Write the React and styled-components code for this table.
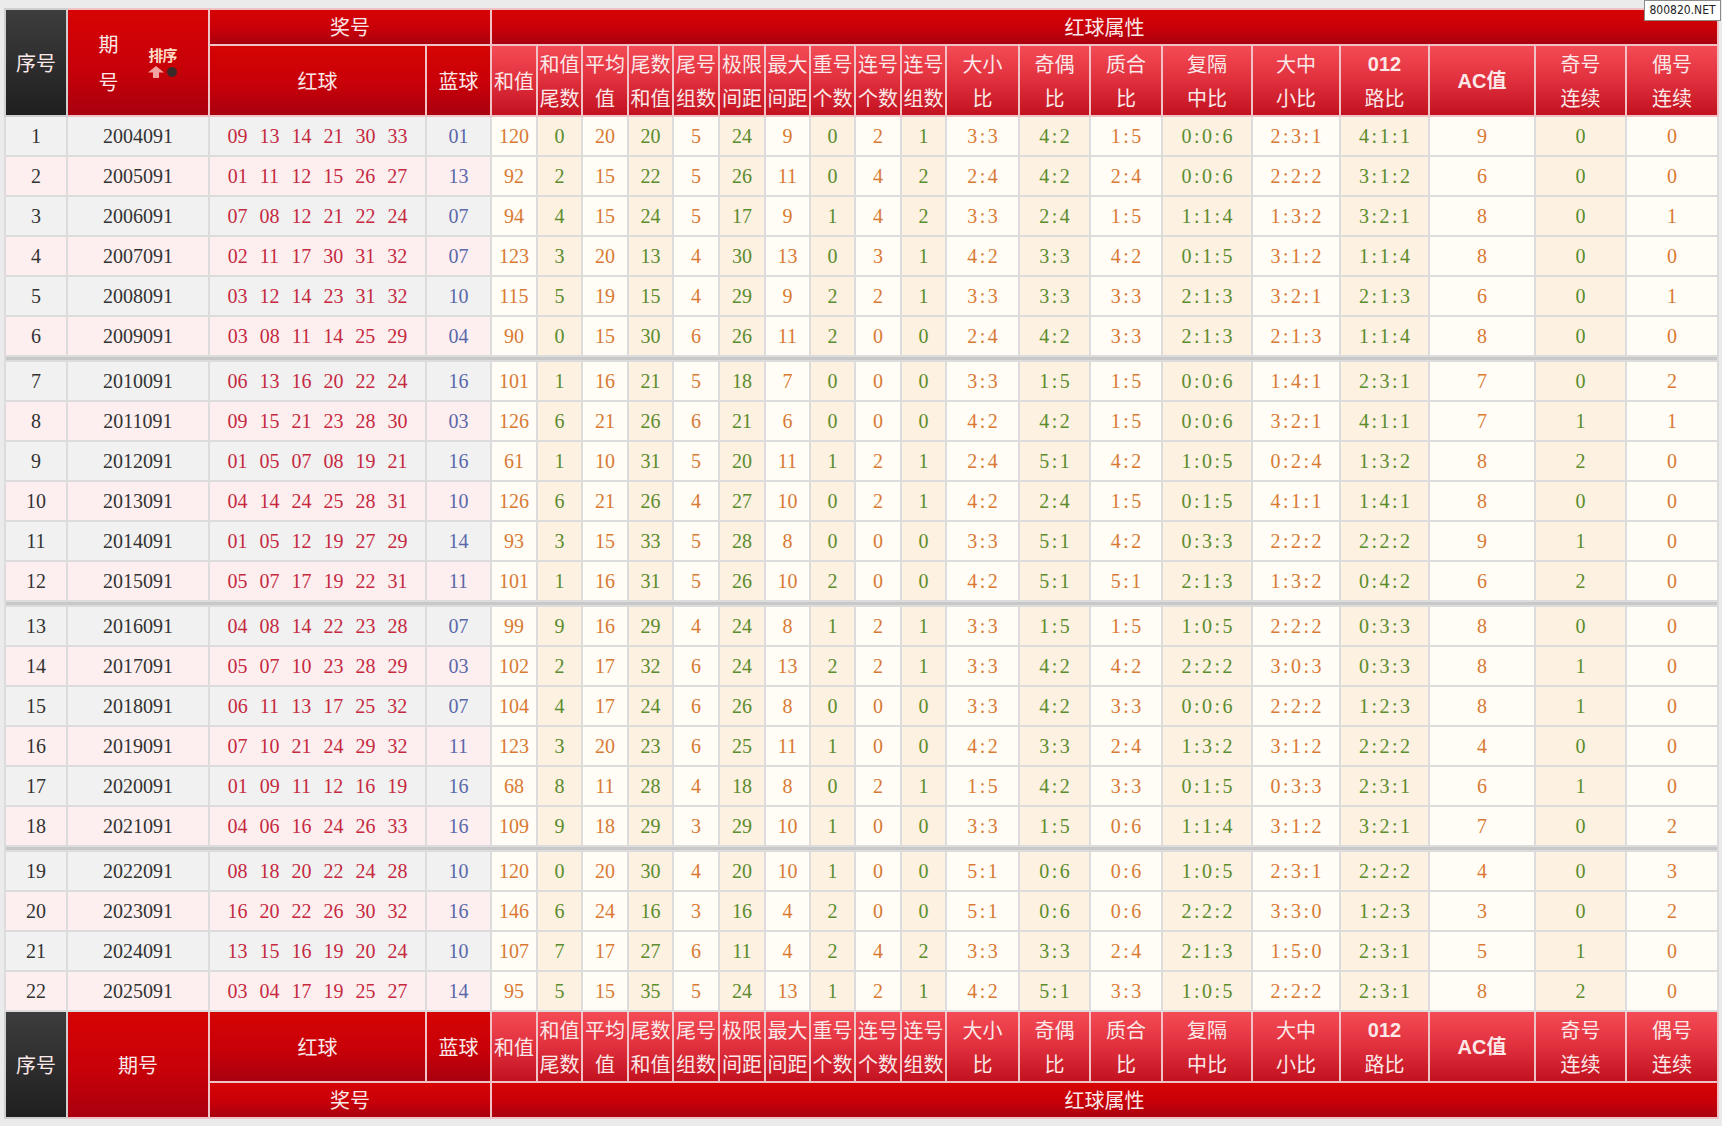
import React from "react";
import styled, { createGlobalStyle } from "styled-components";

const GlobalStyle = createGlobalStyle`
  body {
    margin: 0;
    background: #ebebeb;
    font-family: "Liberation Serif", "Noto Sans CJK SC", serif;
  }
`;

const widths = [62, 142, 217, 65, 46, 45, 46, 45, 46, 46, 45, 45, 46, 45, 73, 71, 72, 90, 88, 89, 106, 91, 92];

const attrHeads = [
  ["和值"], ["和值", "尾数"], ["平均", "值"], ["尾数", "和值"], ["尾号", "组数"],
  ["极限", "间距"], ["最大", "间距"], ["重号", "个数"], ["连号", "个数"], ["连号", "组数"],
  ["大小", "比"], ["奇偶", "比"], ["质合", "比"], ["复隔", "中比"], ["大中", "小比"],
  ["012", "路比"], ["AC值"], ["奇号", "连续"], ["偶号", "连续"],
];

const rows = [
  ["2004091", "09 13 14 21 30 33", "01", "120 0 20 20 5 24 9 0 2 1 3:3 4:2 1:5 0:0:6 2:3:1 4:1:1 9 0 0"],
  ["2005091", "01 11 12 15 26 27", "13", "92 2 15 22 5 26 11 0 4 2 2:4 4:2 2:4 0:0:6 2:2:2 3:1:2 6 0 0"],
  ["2006091", "07 08 12 21 22 24", "07", "94 4 15 24 5 17 9 1 4 2 3:3 2:4 1:5 1:1:4 1:3:2 3:2:1 8 0 1"],
  ["2007091", "02 11 17 30 31 32", "07", "123 3 20 13 4 30 13 0 3 1 4:2 3:3 4:2 0:1:5 3:1:2 1:1:4 8 0 0"],
  ["2008091", "03 12 14 23 31 32", "10", "115 5 19 15 4 29 9 2 2 1 3:3 3:3 3:3 2:1:3 3:2:1 2:1:3 6 0 1"],
  ["2009091", "03 08 11 14 25 29", "04", "90 0 15 30 6 26 11 2 0 0 2:4 4:2 3:3 2:1:3 2:1:3 1:1:4 8 0 0"],
  ["2010091", "06 13 16 20 22 24", "16", "101 1 16 21 5 18 7 0 0 0 3:3 1:5 1:5 0:0:6 1:4:1 2:3:1 7 0 2"],
  ["2011091", "09 15 21 23 28 30", "03", "126 6 21 26 6 21 6 0 0 0 4:2 4:2 1:5 0:0:6 3:2:1 4:1:1 7 1 1"],
  ["2012091", "01 05 07 08 19 21", "16", "61 1 10 31 5 20 11 1 2 1 2:4 5:1 4:2 1:0:5 0:2:4 1:3:2 8 2 0"],
  ["2013091", "04 14 24 25 28 31", "10", "126 6 21 26 4 27 10 0 2 1 4:2 2:4 1:5 0:1:5 4:1:1 1:4:1 8 0 0"],
  ["2014091", "01 05 12 19 27 29", "14", "93 3 15 33 5 28 8 0 0 0 3:3 5:1 4:2 0:3:3 2:2:2 2:2:2 9 1 0"],
  ["2015091", "05 07 17 19 22 31", "11", "101 1 16 31 5 26 10 2 0 0 4:2 5:1 5:1 2:1:3 1:3:2 0:4:2 6 2 0"],
  ["2016091", "04 08 14 22 23 28", "07", "99 9 16 29 4 24 8 1 2 1 3:3 1:5 1:5 1:0:5 2:2:2 0:3:3 8 0 0"],
  ["2017091", "05 07 10 23 28 29", "03", "102 2 17 32 6 24 13 2 2 1 3:3 4:2 4:2 2:2:2 3:0:3 0:3:3 8 1 0"],
  ["2018091", "06 11 13 17 25 32", "07", "104 4 17 24 6 26 8 0 0 0 3:3 4:2 3:3 0:0:6 2:2:2 1:2:3 8 1 0"],
  ["2019091", "07 10 21 24 29 32", "11", "123 3 20 23 6 25 11 1 0 0 4:2 3:3 2:4 1:3:2 3:1:2 2:2:2 4 0 0"],
  ["2020091", "01 09 11 12 16 19", "16", "68 8 11 28 4 18 8 0 2 1 1:5 4:2 3:3 0:1:5 0:3:3 2:3:1 6 1 0"],
  ["2021091", "04 06 16 24 26 33", "16", "109 9 18 29 3 29 10 1 0 0 3:3 1:5 0:6 1:1:4 3:1:2 3:2:1 7 0 2"],
  ["2022091", "08 18 20 22 24 28", "10", "120 0 20 30 4 20 10 1 0 0 5:1 0:6 0:6 1:0:5 2:3:1 2:2:2 4 0 3"],
  ["2023091", "16 20 22 26 30 32", "16", "146 6 24 16 3 16 4 2 0 0 5:1 0:6 0:6 2:2:2 3:3:0 1:2:3 3 0 2"],
  ["2024091", "13 15 16 19 20 24", "10", "107 7 17 27 6 11 4 2 4 2 3:3 3:3 2:4 2:1:3 1:5:0 2:3:1 5 1 0"],
  ["2025091", "03 04 17 19 25 27", "14", "95 5 15 35 5 24 13 1 2 1 4:2 5:1 3:3 1:0:5 2:2:2 2:3:1 8 2 0"],
];

const tones = {
  dark: "linear-gradient(#3d3d3d, #1f1f1f)",
  red: "linear-gradient(#d60404 0%, #c80008 55%, #a9000f 100%)",
  attr: "linear-gradient(#f44b55 0%, #e0303d 50%, #c2121f 100%)",
};

const Page = styled.div`
  position: relative;
  padding: 8px 0 4px 4px;
`;

const Sheet = styled.table`
  width: 1713px;
  table-layout: fixed;
  border-collapse: collapse;
  font-size: 20px;
`;

const Head = styled.th`
  padding: 0;
  height: ${(p) => p.$h}px;
  border: 2px solid ${(p) => (p.$tone === "dark" ? "#cfcfcf" : "#f1c2c5")};
  background: ${(p) => tones[p.$tone]};
  color: #fbe8e8;
  font-family: "Noto Sans CJK SC", sans-serif;
  font-weight: normal;
  font-size: 20px;
  line-height: 34px;
  text-align: center;
  vertical-align: middle;
  white-space: nowrap;
`;

const Bold = styled.span`
  font-family: "Liberation Sans", "Noto Sans CJK SC", sans-serif;
  font-weight: bold;
`;

const Cell = styled.td`
  padding: 0;
  height: 38px;
  border: 2px solid #dcdcdc;
  background: ${(p) => p.$bg};
  color: ${(p) => p.$fg};
  text-align: center;
  vertical-align: middle;
  white-space: nowrap;
`;

const Balls = styled.span`
  display: inline-flex;
  gap: 12px;
`;

const Colon = styled.span`
  margin: 0 2.5px;
`;

const Divider = styled.td`
  padding: 0;
  height: 3px;
  background: #c8c8c8;
  border-left: 2px solid #dcdcdc;
  border-right: 2px solid #dcdcdc;
`;

const IssueHead = styled.div`
  display: flex;
  align-items: center;
  justify-content: center;
  gap: 29px;
`;

const Stack = styled.div`
  display: flex;
  flex-direction: column;
  line-height: 38px;
`;

const Sort = styled.div`
  display: flex;
  flex-direction: column;
  align-items: center;
  gap: 3px;
  font-size: 15px;
  font-weight: bold;
  line-height: 16px;
  color: #ffdcc6;
  letter-spacing: -1px;
`;

const Watermark = styled.div`
  position: absolute;
  top: 0;
  right: 1px;
  width: 77px;
  height: 21px;
  box-sizing: border-box;
  border: 1px solid #8a8a8a;
  background: #fff;
  color: #222;
  font-family: "DejaVu Sans Condensed", "DejaVu Sans", sans-serif;
  font-size: 12px;
  line-height: 19px;
  text-align: center;
`;

const HeadLabel = ({ lines }) => {
  const bold = lines[0] === "012" || lines[0] === "AC值";
  return lines.map((t, i) => (
    <React.Fragment key={i}>
      {i > 0 && <br />}
      {bold && i === 0 ? <Bold>{t}</Bold> : t}
    </React.Fragment>
  ));
};

const AttrHeads = ({ h }) =>
  attrHeads.map((lines, i) => (
    <Head key={i} $tone="attr" $h={h}>
      <HeadLabel lines={lines} />
    </Head>
  ));

const SortIcon = () => (
  <Sort>
    <span>排序</span>
    <svg width="30" height="12" viewBox="0 0 30 12">
      <polygon points="0,6.5 8,0 16,6.5 11,6.5 11,12 5,12 5,6.5" fill="#f2a2a2" />
      <circle cx="24" cy="6" r="5" fill="#3b2a2a" />
    </svg>
  </Sort>
);

// ratios like 0:0:6 are drawn with a wider colon, as in the source page
const Value = ({ v }) => {
  const parts = v.split(":");
  return parts.map((p, i) => (
    <React.Fragment key={i}>
      {i > 0 && <Colon>:</Colon>}
      {p}
    </React.Fragment>
  ));
};

const DataRow = ({ no, row }) => {
  const [issue, reds, blue, attrs] = row;
  const side = no % 2 ? "#f1f1f1" : "#fdeff0";
  return (
    <tr>
      <Cell $bg={side} $fg="#333">{no}</Cell>
      <Cell $bg={side} $fg="#333">{issue}</Cell>
      <Cell $bg={side} $fg="#c52a3f">
        <Balls>
          {reds.split(" ").map((b, i) => (
            <span key={i}>{b}</span>
          ))}
        </Balls>
      </Cell>
      <Cell $bg={side} $fg="#5a68aa">{blue}</Cell>
      {attrs.split(" ").map((v, i) =>
        i % 2 ? (
          <Cell key={i} $bg="#fdf1e1" $fg="#5b8c2d"><Value v={v} /></Cell>
        ) : (
          <Cell key={i} $bg="#fffdf6" $fg="#d97a34"><Value v={v} /></Cell>
        )
      )}
    </tr>
  );
};

const Gap = () => (
  <tr>
    <Divider colSpan={23} />
  </tr>
);

export default function App() {
  const body = [];
  rows.forEach((row, i) => {
    if (i === 6 || i === 12 || i === 18) body.push(<Gap key={"g" + i} />);
    body.push(<DataRow key={i} no={i + 1} row={row} />);
  });

  return (
    <Page>
      <GlobalStyle />
      <Sheet>
        <colgroup>
          {widths.map((w, i) => (
            <col key={i} style={{ width: w }} />
          ))}
        </colgroup>
        <thead>
          <tr>
            <Head $tone="dark" $h={33} rowSpan={2}>序号</Head>
            <Head $tone="red" $h={33} rowSpan={2}>
              <IssueHead>
                <Stack>
                  <span>期</span>
                  <span>号</span>
                </Stack>
                <SortIcon />
              </IssueHead>
            </Head>
            <Head $tone="red" $h={33} colSpan={2}>奖号</Head>
            <Head $tone="red" $h={33} colSpan={19}>红球属性</Head>
          </tr>
          <tr>
            <Head $tone="red" $h={66}>红球</Head>
            <Head $tone="red" $h={66}>蓝球</Head>
            <AttrHeads h={66} />
          </tr>
        </thead>
        <tbody>{body}</tbody>
        <tfoot>
          <tr>
            <Head $tone="dark" $h={66} rowSpan={2}>序号</Head>
            <Head $tone="red" $h={66} rowSpan={2}>期号</Head>
            <Head $tone="red" $h={66}>红球</Head>
            <Head $tone="red" $h={66}>蓝球</Head>
            <AttrHeads h={66} />
          </tr>
          <tr>
            <Head $tone="red" $h={33} colSpan={2}>奖号</Head>
            <Head $tone="red" $h={33} colSpan={19}>红球属性</Head>
          </tr>
        </tfoot>
      </Sheet>
      <Watermark>800820.NET</Watermark>
    </Page>
  );
}
